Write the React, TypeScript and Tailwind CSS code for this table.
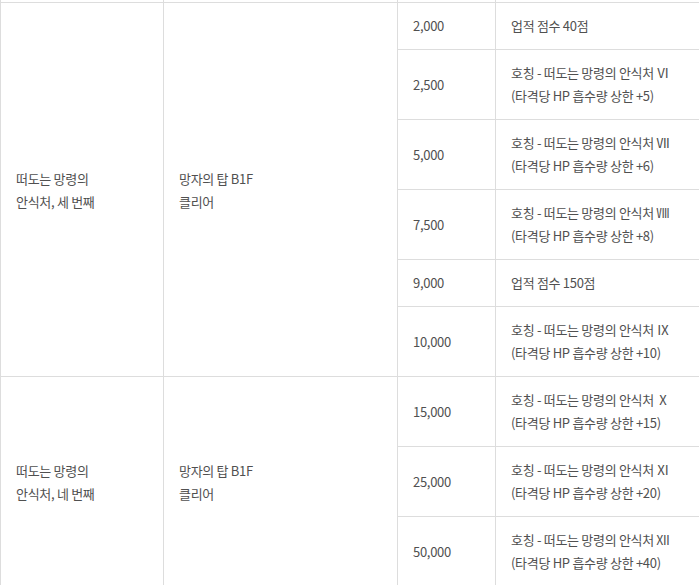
import React from "react";

type Row = { score: string; lines: string[] };

const group1: Row[] = [
  { score: "2,000", lines: ["업적 점수 40점"] },
  { score: "2,500", lines: ["호칭 - 떠도는 망령의 안식처 Ⅵ", "(타격당 HP 흡수량 상한 +5)"] },
  { score: "5,000", lines: ["호칭 - 떠도는 망령의 안식처 Ⅶ", "(타격당 HP 흡수량 상한 +6)"] },
  { score: "7,500", lines: ["호칭 - 떠도는 망령의 안식처 Ⅷ", "(타격당 HP 흡수량 상한 +8)"] },
  { score: "9,000", lines: ["업적 점수 150점"] },
  { score: "10,000", lines: ["호칭 - 떠도는 망령의 안식처 Ⅸ", "(타격당 HP 흡수량 상한 +10)"] },
];

const group2: Row[] = [
  { score: "15,000", lines: ["호칭 - 떠도는 망령의 안식처 Ⅹ", "(타격당 HP 흡수량 상한 +15)"] },
  { score: "25,000", lines: ["호칭 - 떠도는 망령의 안식처 Ⅺ", "(타격당 HP 흡수량 상한 +20)"] },
  { score: "50,000", lines: ["호칭 - 떠도는 망령의 안식처 Ⅻ", "(타격당 HP 흡수량 상한 +40)"] },
];

function Group({ name, cond, rows }: { name: string[]; cond: string[]; rows: Row[] }) {
  return (
    <div className="flex border-t border-[#dddddd]">
      <div className="w-[164px] shrink-0 border-l border-r border-[#dddddd] flex items-center pl-[15px]">
        <div>
          {name.map((l, i) => (
            <div key={i}>{l}</div>
          ))}
        </div>
      </div>
      <div className="w-[234px] shrink-0 border-r border-[#dddddd] flex items-center pl-[15px]">
        <div>
          {cond.map((l, i) => (
            <div key={i}>{l}</div>
          ))}
        </div>
      </div>
      <div className="flex-1 flex flex-col">
        {rows.map((r, i) => (
          <div key={i} className={"flex " + (i > 0 ? "border-t border-[#dddddd]" : "")}>
            <div className="w-[98px] shrink-0 border-r border-[#dddddd] flex items-center pl-[15px] pt-[11px] pb-[12px]">
              {r.score}
            </div>
            <div className="flex-1 pl-[15px] pt-[11px] pb-[12px]">
              {r.lines.map((l, j) => (
                <div key={j} className="whitespace-nowrap">{l}</div>
              ))}
            </div>
          </div>
        ))}
      </div>
    </div>
  );
}

export default function App() {
  return (
    <div
      className="w-[699px] h-[585px] overflow-hidden bg-white text-[13px] leading-[23px] tracking-[-0.3px] text-[#505050]"
      style={{ fontFamily: '"Noto Sans CJK KR", "Noto Sans", sans-serif' }}
    >
      <div className="w-[800px]">
        <div className="flex h-[2px]">
          <div className="w-[164px] border-l border-r border-[#dddddd]" />
          <div className="w-[234px] border-r border-[#dddddd]" />
          <div className="w-[98px] border-r border-[#dddddd]" />
        </div>
        <Group name={["떠도는 망령의", "안식처, 세 번째"]} cond={["망자의 탑 B1F", "클리어"]} rows={group1} />
        <Group name={["떠도는 망령의", "안식처, 네 번째"]} cond={["망자의 탑 B1F", "클리어"]} rows={group2} />
      </div>
    </div>
  );
}
